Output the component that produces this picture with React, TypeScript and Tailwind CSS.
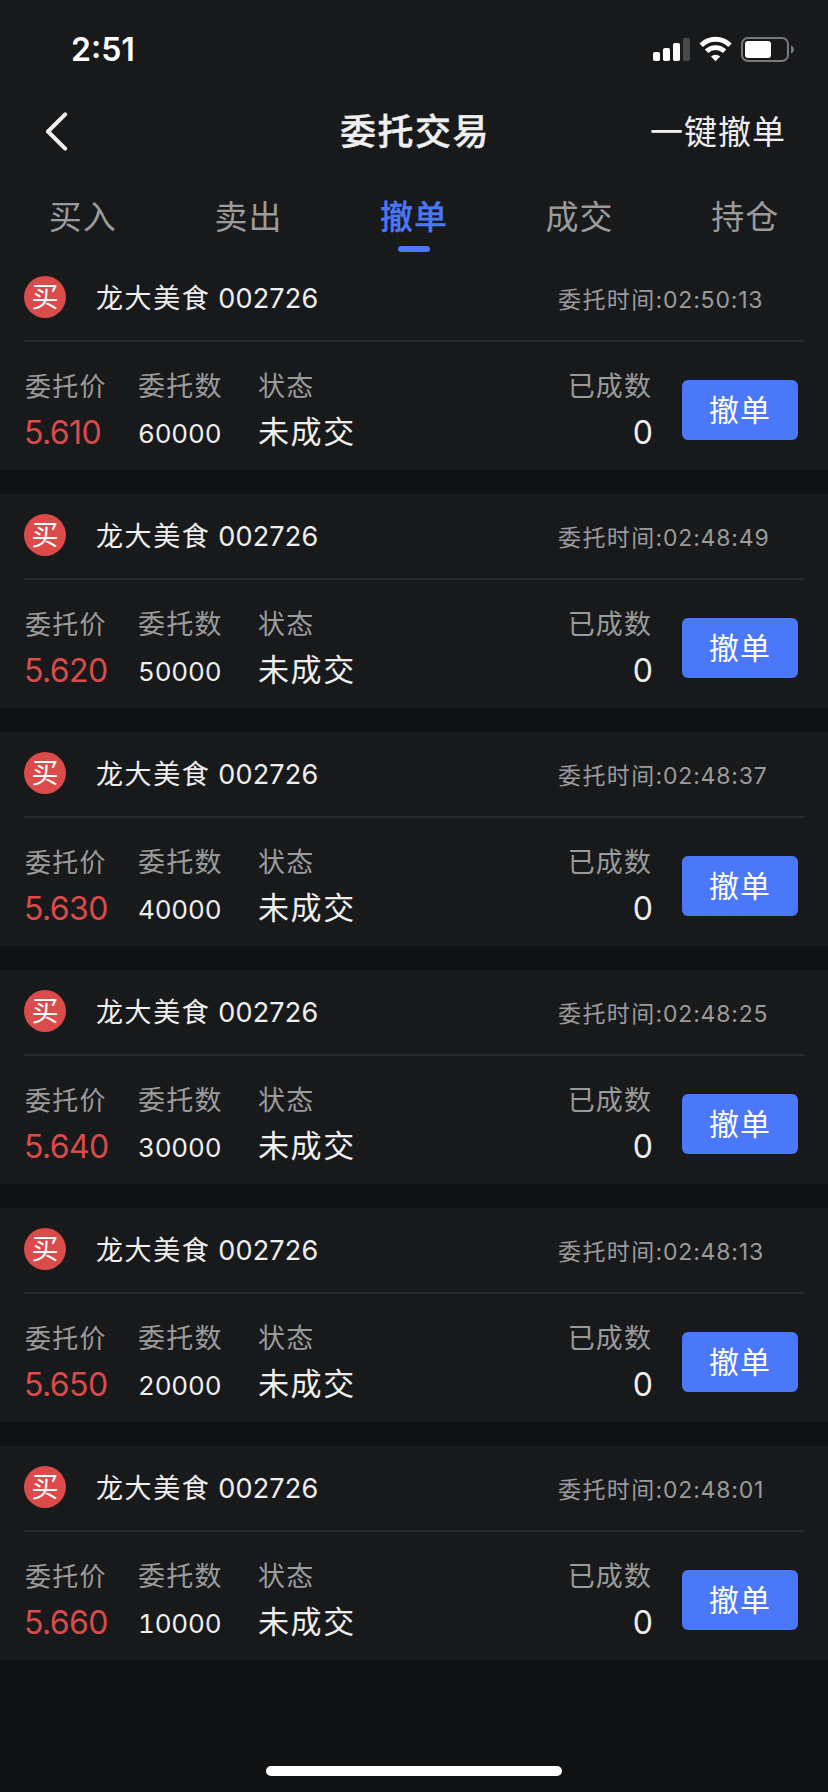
import clsx from "clsx";

interface Order {
  price: string;
  amount: string;
  time: string;
}

const tabs = ["买入", "卖出", "撤单", "成交", "持仓"];

const orders: Order[] = [
  { price: "5.610", amount: "60000", time: "02:50:13" },
  { price: "5.620", amount: "50000", time: "02:48:49" },
  { price: "5.630", amount: "40000", time: "02:48:37" },
  { price: "5.640", amount: "30000", time: "02:48:25" },
  { price: "5.650", amount: "20000", time: "02:48:13" },
  { price: "5.660", amount: "10000", time: "02:48:01" },
];

function StatusBar() {
  return (
    <div className="flex h-[88px] items-start justify-between pt-[30px] pr-[34px] pl-[71px] text-white">
      <span className="text-[32px] leading-10 font-semibold">2:51</span>
      <svg className="mt-[6px]" width="142" height="28" viewBox="652 36 142 28" fill="none">
        <rect x="653" y="52" width="7" height="9" rx="1.8" fill="#fff" />
        <rect x="663" y="48" width="7" height="13" rx="1.8" fill="#fff" />
        <rect x="673" y="43" width="7" height="18" rx="1.8" fill="#fff" />
        <rect x="683" y="38" width="7" height="23" rx="1.8" fill="#47484a" />
        <path d="M701.2 45.2a20.6 20.6 0 0 1 28.8 0" stroke="#fff" strokeWidth="5" />
        <path d="M706.6 51.3a13 13 0 0 1 18 0" stroke="#fff" strokeWidth="4.8" />
        <path d="M711 56.6a6.6 6.6 0 0 1 9.2 0L715.6 61.2z" fill="#fff" />
        <rect x="742" y="38" width="46" height="23" rx="6" stroke="#77787a" strokeWidth="2" />
        <rect x="745" y="41" width="26" height="17" rx="3" fill="#fff" />
        <path d="M791 45.5c1.8.6 3 2.2 3 4s-1.2 3.4-3 4z" fill="#77787a" />
      </svg>
    </div>
  );
}

function NavBar() {
  return (
    <div className="grid h-[90px] grid-cols-3 items-start border-b-2 border-[#1a1b22] pt-5 pr-[42px] pl-[44px] text-[#efefef]">
      <svg className="mt-[3px]" width="24" height="42" viewBox="44 111 24 42" fill="none">
        <path d="M65.2 114.3 48 131.5l17.2 17.2" stroke="#efefef" strokeWidth="4" strokeLinecap="round" strokeLinejoin="round" />
      </svg>
      <h1 className="text-center text-[36px] leading-[48px] font-medium tracking-[1.5px] whitespace-nowrap [-webkit-text-stroke:0.4px]">委托交易</h1>
      <span className="text-right text-[33px] leading-[49px] tracking-[1px] whitespace-nowrap">一键撤单</span>
    </div>
  );
}

function Tabs() {
  return (
    <div className="grid h-[78px] grid-cols-5">
      {tabs.map((tab) => {
        const active = tab === "撤单";
        return (
          <div key={tab} className="flex flex-col items-center pt-4">
            <span
              className={clsx(
                "text-[33px] leading-[46px] tracking-[1px]",
                active ? "font-medium text-[#4b77f9] [-webkit-text-stroke:0.3px]" : "text-[#9b9b9b]"
              )}
            >
              {tab}
            </span>
            {active && <span className="mt-[6px] h-[6px] w-8 rounded-full bg-[#4b77f9]" />}
          </div>
        );
      })}
    </div>
  );
}

function OrderCard({ order }: { order: Order }) {
  return (
    <div className="h-[214px] bg-[#18191b] pl-6 text-[#efefef]">
      <div className="mr-6 flex h-[86px] items-start border-b-2 border-[#27282b] pt-5">
        <div className="h-[42px] w-[42px] rounded-full bg-[#db4b4a] text-center text-[27px] leading-[43px] text-white">买</div>
        <div className="ml-[30px] text-[27px] leading-[46px] tracking-[0.2px] whitespace-nowrap">
          <span className="tracking-[1.6px]">龙大美食</span> 002726
        </div>
        <div className="mt-[2px] ml-auto w-[246px] text-[23px] leading-[44px] tracking-[0.8px] whitespace-nowrap text-[#9b9b9b]">
          <span className="tracking-[1.4px]">委托时间</span>:{order.time}
        </div>
      </div>
      <div className="flex pt-[22px] pr-[30px]">
        <div className="w-[114px]">
          <div className="pl-px text-[26px] leading-[46px] tracking-[1.2px] text-[#9b9b9b]">委托价</div>
          <div className="text-[32px] leading-[45px] tracking-[-0.6px] text-[#db4b4a]">{order.price}</div>
        </div>
        <div className="w-[120px]">
          <div className="text-[27px] leading-[46px] tracking-[1.2px] text-[#9b9b9b]">委托数</div>
          <div className="pt-[3px] text-[26px] leading-[41px] tracking-[-0.2px] tabular-nums">{order.amount}</div>
        </div>
        <div>
          <div className="text-[27px] leading-[46px] tracking-[1.2px] text-[#9b9b9b]">状态</div>
          <div className="text-[31px] leading-[43px] tracking-[1.6px]">未成交</div>
        </div>
        <div className="ml-auto text-right">
          <div className="text-[27px] leading-[46px] tracking-[1.1px] text-[#9b9b9b]">已成数</div>
          <div className="text-[32px] leading-[45px] tracking-[-1px]">0</div>
        </div>
        <button className="mt-[16px] ml-[30px] h-[60px] w-[116px] rounded-md bg-[#4b77f9] text-[30px] leading-[60px] tracking-[1px] text-white">
          撤单
        </button>
      </div>
    </div>
  );
}

export default function App() {
  return (
    <div className="flex h-[1792px] w-[828px] flex-col bg-[#101113] font-[Inter,'Noto_Sans_CJK_SC',sans-serif]">
      <div className="bg-[#18191b]">
        <StatusBar />
        <NavBar />
        <Tabs />
      </div>
      <div className="flex flex-col gap-6">
        {orders.map((order) => (
          <OrderCard key={order.price} order={order} />
        ))}
      </div>
      <div className="mt-auto mb-4 h-[10px] w-[296px] self-center rounded-full bg-white" />
    </div>
  );
}
